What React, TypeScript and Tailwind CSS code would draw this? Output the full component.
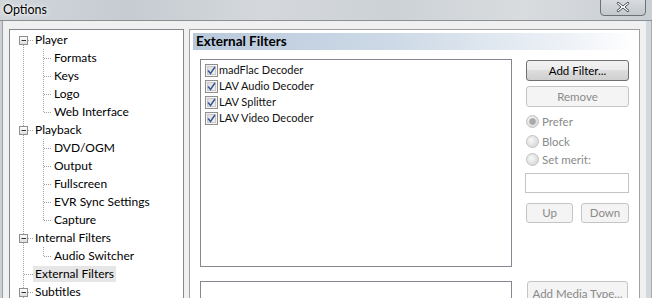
import React from "react";

const FONT = "font-['Lato','Noto_Sans',sans-serif]";

type Node = { label: string; level: 0 | 1; first?: boolean; lastChild?: boolean; expandable?: boolean; selected?: boolean };

const nodes: Node[] = [
  { label: "Player", level: 0, first: true, expandable: true },
  { label: "Formats", level: 1 },
  { label: "Keys", level: 1 },
  { label: "Logo", level: 1 },
  { label: "Web Interface", level: 1, lastChild: true },
  { label: "Playback", level: 0, expandable: true },
  { label: "DVD/OGM", level: 1 },
  { label: "Output", level: 1 },
  { label: "Fullscreen", level: 1 },
  { label: "EVR Sync Settings", level: 1 },
  { label: "Capture", level: 1, lastChild: true },
  { label: "Internal Filters", level: 0, expandable: true },
  { label: "Audio Switcher", level: 1, lastChild: true },
  { label: "External Filters", level: 0, selected: true },
  { label: "Subtitles", level: 0, expandable: true },
];

const DOT = "#a0a0a0";

function Connector({ n }: { n: Node }) {
  if (n.level === 0) {
    return (
      <svg width="23" height="18" className="shrink-0">
        <line x1="13.5" y1={n.first ? 10 : 0} x2="13.5" y2="18" stroke={DOT} strokeDasharray="1 1" />
        <line x1="14" y1="9.5" x2="23" y2="9.5" stroke={DOT} strokeDasharray="1 1" />
        {n.expandable && (
          <g>
            <defs>
              <linearGradient id="exp" x1="0" y1="0" x2="0" y2="1">
                <stop offset="0" stopColor="#ffffff" />
                <stop offset="1" stopColor="#dcdcdc" />
              </linearGradient>
            </defs>
            <rect x="9.5" y="5.5" width="8" height="8" fill="url(#exp)" stroke="#8e8f8f" />
            <line x1="11.5" y1="9.5" x2="16" y2="9.5" stroke="#333" />
          </g>
        )}
      </svg>
    );
  }
  return (
    <svg width="42" height="18" className="shrink-0">
      <line x1="13.5" y1="0" x2="13.5" y2="18" stroke={DOT} strokeDasharray="1 1" />
      <line x1="33.5" y1="0" x2="33.5" y2={n.lastChild ? 10 : 18} stroke={DOT} strokeDasharray="1 1" />
      <line x1="34" y1="9.5" x2="42" y2="9.5" stroke={DOT} strokeDasharray="1 1" />
    </svg>
  );
}

function Tree() {
  return (
    <div className="w-[175px] h-[290px] shrink-0 border border-[#828790] bg-white pt-[1px] overflow-hidden">
      {nodes.map((n) => (
        <div key={n.label} className="flex items-center h-[18px]">
          <Connector n={n} />
          <span
            className={`px-[2px] h-[16px] leading-[16px] text-[12px] text-black whitespace-nowrap ${
              n.selected ? "bg-[#e6e6e6]" : ""
            }`}
          >
            {n.label}
          </span>
        </div>
      ))}
    </div>
  );
}

function Check() {
  return (
    <svg width="13" height="13" className="shrink-0">
      <defs>
        <linearGradient id="cb" x1="0" y1="0" x2="1" y2="1">
          <stop offset="0" stopColor="#d8d8d8" />
          <stop offset="1" stopColor="#f6f6f6" />
        </linearGradient>
      </defs>
      <rect x="0.5" y="0.5" width="12" height="12" fill="#f4f4f4" stroke="#8f8f8f" />
      <rect x="2.5" y="2.5" width="8" height="8" fill="url(#cb)" stroke="#c9c9c9" />
      <path d="M3 6.5 L5.5 9.5 L10 3" fill="none" stroke="#3b5a99" strokeWidth="1.6" />
    </svg>
  );
}

function Radio({ on }: { on?: boolean }) {
  return (
    <svg width="13" height="13" className="shrink-0">
      <defs>
        <radialGradient id="rd" cx="0.4" cy="0.4" r="0.7">
          <stop offset="0" stopColor="#f8f8f8" />
          <stop offset="1" stopColor="#d4d4d4" />
        </radialGradient>
      </defs>
      <circle cx="6.5" cy="6.5" r="6" fill="url(#rd)" stroke="#c2c2c2" />
      {on && <circle cx="6.5" cy="6.5" r="3" fill="#a9a9a9" stroke="#9a9a9a" strokeWidth="0.5" />}
    </svg>
  );
}

function Btn({ children, disabled, className = "" }: { children: React.ReactNode; disabled?: boolean; className?: string }) {
  return (
    <div
      className={`flex items-center justify-center whitespace-nowrap rounded-[3px] border text-[11.5px] ${
        disabled
          ? "border-[#c2c5c8] bg-[#f4f4f4] text-[#8a8a8a]"
          : "border-[#707070] bg-[linear-gradient(#f2f2f2_0%,#ebebeb_49%,#dddddd_50%,#cfcfcf_100%)] text-black"
      } ${className}`}
    >
      {children}
    </div>
  );
}

function Panel() {
  const filters = ["madFlac Decoder", "LAV Audio Decoder", "LAV Splitter", "LAV Video Decoder"];
  return (
    <div className="w-[451px] h-[280px] shrink-0 border border-[#a0a0a0] bg-white p-[3px] flex flex-col">
      <div className="h-[17px] bg-[linear-gradient(90deg,#b9c9dc_0%,#cdd9e6_45%,#eef2f7_85%,#ffffff_100%)] pl-[3px] text-[13.5px] font-bold leading-[17px] text-black">
        External Filters
      </div>
      <div className="flex pl-[7px] pt-[9px]">
        <div className="w-[312px] h-[208px] border border-[#828790] bg-white pl-[4px] pt-[2px]">
          {filters.map((f) => (
            <div key={f} className="flex items-center h-[16px] gap-[1px]">
              <Check />
              <span className="text-[11px] leading-[16px] text-[#111] whitespace-nowrap">{f}</span>
            </div>
          ))}
        </div>
        <div className="ml-[14px] w-[103px] flex flex-col pt-[1px]">
          <Btn className="h-[21px]">Add Filter...</Btn>
          <Btn disabled className="h-[21px] mt-[5px]">Remove</Btn>
          <div className="mt-[8px] flex flex-col gap-[7px] text-[11.5px] text-[#8a8a8a]">
            <div className="flex items-center gap-[3px] h-[13px]"><Radio on /><span>Prefer</span></div>
            <div className="flex items-center gap-[3px] h-[13px]"><Radio /><span>Block</span></div>
            <div className="flex items-center gap-[3px] h-[13px] mt-[-2px]"><Radio /><span>Set merit:</span></div>
          </div>
          <div className="mt-[7px] h-[20px] w-[104px] -ml-[1px] border border-[#c2c5c8] bg-white" />
          <div className="mt-[10px] flex justify-between">
            <Btn disabled className="h-[20px] w-[47px]">Up</Btn>
            <Btn disabled className="h-[20px] w-[48px]">Down</Btn>
          </div>
        </div>
      </div>
      <div className="ml-[7px] mt-[7px] w-[423px] h-[1px] bg-[#a0a0a0] border-b border-white" />
      <div className="flex pl-[7px] pt-[6px]">
        <div className="w-[312px] h-[40px] border border-[#828790] bg-white" />
        <Btn disabled className="ml-[15px] w-[101px] h-[22px] items-start pt-[3px]">Add Media Type...</Btn>
      </div>
    </div>
  );
}

export default function App() {
  return (
    <div className={`w-[652px] h-[298px] overflow-hidden flex flex-col bg-[#f0f0f0] ${FONT}`}>
      <div className="relative h-[21px] shrink-0 bg-[linear-gradient(90deg,#cfd5da_0%,#c6ccd2_20%,#d4d8dc_40%,#cdd2d6_60%,#d8dcdf_80%,#c9ced3_100%)] border-b border-[#8a8f94] flex items-center">
        <span className="pl-[3px] text-[12.5px] text-black [text-shadow:0_0_6px_#ffffff,0_0_3px_#ffffff]">Options</span>
        <div className="absolute right-[6px] top-[-2px] w-[46px] h-[18px] rounded-b-[4px] border border-[#6b7177] bg-[linear-gradient(#d9dde1,#c3c8cd)] flex items-center justify-center">
          <svg width="14" height="12" viewBox="0 0 14 12">
            <path d="M2 1 L7 5 L12 1 L13 2.5 L9 6 L13 9.5 L12 11 L7 7 L2 11 L1 9.5 L5 6 L1 2.5 Z" fill="#ffffff" stroke="#4d5257" strokeWidth="1" strokeLinejoin="round" />
          </svg>
        </div>
      </div>
      <div className="flex flex-1 min-h-0">
        <div className="w-[3px] shrink-0 bg-[#c9cfd5] border-r border-[#9aa0a6]" />
        <div className="flex flex-1 pl-[6px] pt-[8px] gap-[5px]">
          <Tree />
          <Panel />
        </div>
        <div className="w-[7px] shrink-0 bg-[#d3d8dc] border-l border-[#eef0f2] border-r border-r-[#a6abb0]" />
      </div>
    </div>
  );
}
